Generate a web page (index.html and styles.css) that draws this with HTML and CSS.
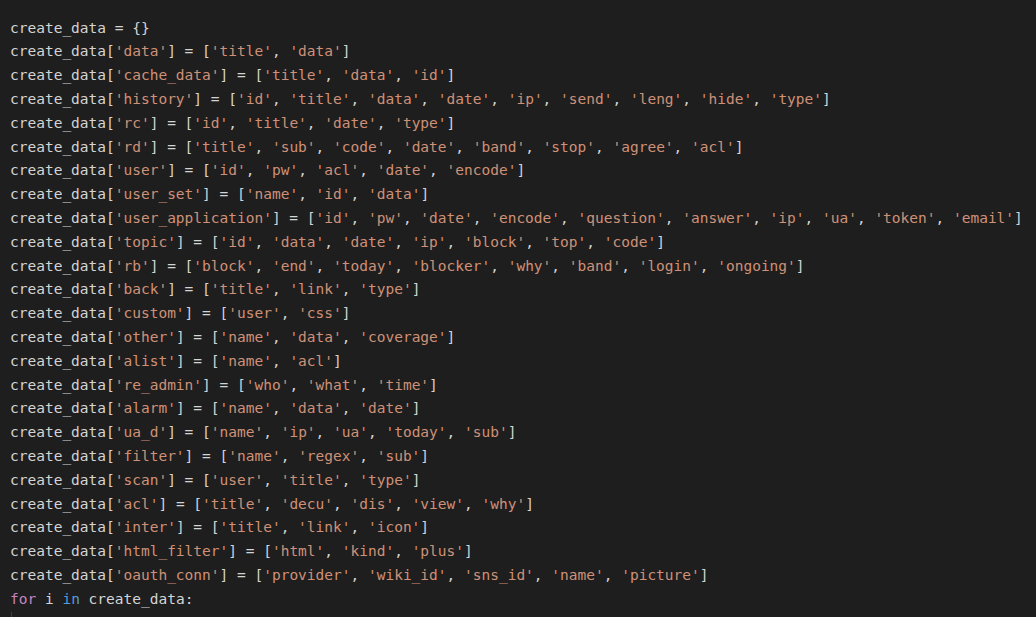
FILE: index.html
```html
<!DOCTYPE html>
<html>
<head>
<meta charset="utf-8">
<link rel="stylesheet" href="styles.css">
</head>
<body>
<div class="editor">
<div class="line">create_data = {}</div>
<div class="line">create_data[<span class="s">'data'</span>] = [<span class="s">'title'</span>, <span class="s">'data'</span>]</div>
<div class="line">create_data[<span class="s">'cache_data'</span>] = [<span class="s">'title'</span>, <span class="s">'data'</span>, <span class="s">'id'</span>]</div>
<div class="line">create_data[<span class="s">'history'</span>] = [<span class="s">'id'</span>, <span class="s">'title'</span>, <span class="s">'data'</span>, <span class="s">'date'</span>, <span class="s">'ip'</span>, <span class="s">'send'</span>, <span class="s">'leng'</span>, <span class="s">'hide'</span>, <span class="s">'type'</span>]</div>
<div class="line">create_data[<span class="s">'rc'</span>] = [<span class="s">'id'</span>, <span class="s">'title'</span>, <span class="s">'date'</span>, <span class="s">'type'</span>]</div>
<div class="line">create_data[<span class="s">'rd'</span>] = [<span class="s">'title'</span>, <span class="s">'sub'</span>, <span class="s">'code'</span>, <span class="s">'date'</span>, <span class="s">'band'</span>, <span class="s">'stop'</span>, <span class="s">'agree'</span>, <span class="s">'acl'</span>]</div>
<div class="line">create_data[<span class="s">'user'</span>] = [<span class="s">'id'</span>, <span class="s">'pw'</span>, <span class="s">'acl'</span>, <span class="s">'date'</span>, <span class="s">'encode'</span>]</div>
<div class="line">create_data[<span class="s">'user_set'</span>] = [<span class="s">'name'</span>, <span class="s">'id'</span>, <span class="s">'data'</span>]</div>
<div class="line">create_data[<span class="s">'user_application'</span>] = [<span class="s">'id'</span>, <span class="s">'pw'</span>, <span class="s">'date'</span>, <span class="s">'encode'</span>, <span class="s">'question'</span>, <span class="s">'answer'</span>, <span class="s">'ip'</span>, <span class="s">'ua'</span>, <span class="s">'token'</span>, <span class="s">'email'</span>]</div>
<div class="line">create_data[<span class="s">'topic'</span>] = [<span class="s">'id'</span>, <span class="s">'data'</span>, <span class="s">'date'</span>, <span class="s">'ip'</span>, <span class="s">'block'</span>, <span class="s">'top'</span>, <span class="s">'code'</span>]</div>
<div class="line">create_data[<span class="s">'rb'</span>] = [<span class="s">'block'</span>, <span class="s">'end'</span>, <span class="s">'today'</span>, <span class="s">'blocker'</span>, <span class="s">'why'</span>, <span class="s">'band'</span>, <span class="s">'login'</span>, <span class="s">'ongoing'</span>]</div>
<div class="line">create_data[<span class="s">'back'</span>] = [<span class="s">'title'</span>, <span class="s">'link'</span>, <span class="s">'type'</span>]</div>
<div class="line">create_data[<span class="s">'custom'</span>] = [<span class="s">'user'</span>, <span class="s">'css'</span>]</div>
<div class="line">create_data[<span class="s">'other'</span>] = [<span class="s">'name'</span>, <span class="s">'data'</span>, <span class="s">'coverage'</span>]</div>
<div class="line">create_data[<span class="s">'alist'</span>] = [<span class="s">'name'</span>, <span class="s">'acl'</span>]</div>
<div class="line">create_data[<span class="s">'re_admin'</span>] = [<span class="s">'who'</span>, <span class="s">'what'</span>, <span class="s">'time'</span>]</div>
<div class="line">create_data[<span class="s">'alarm'</span>] = [<span class="s">'name'</span>, <span class="s">'data'</span>, <span class="s">'date'</span>]</div>
<div class="line">create_data[<span class="s">'ua_d'</span>] = [<span class="s">'name'</span>, <span class="s">'ip'</span>, <span class="s">'ua'</span>, <span class="s">'today'</span>, <span class="s">'sub'</span>]</div>
<div class="line">create_data[<span class="s">'filter'</span>] = [<span class="s">'name'</span>, <span class="s">'regex'</span>, <span class="s">'sub'</span>]</div>
<div class="line">create_data[<span class="s">'scan'</span>] = [<span class="s">'user'</span>, <span class="s">'title'</span>, <span class="s">'type'</span>]</div>
<div class="line">create_data[<span class="s">'acl'</span>] = [<span class="s">'title'</span>, <span class="s">'decu'</span>, <span class="s">'dis'</span>, <span class="s">'view'</span>, <span class="s">'why'</span>]</div>
<div class="line">create_data[<span class="s">'inter'</span>] = [<span class="s">'title'</span>, <span class="s">'link'</span>, <span class="s">'icon'</span>]</div>
<div class="line">create_data[<span class="s">'html_filter'</span>] = [<span class="s">'html'</span>, <span class="s">'kind'</span>, <span class="s">'plus'</span>]</div>
<div class="line">create_data[<span class="s">'oauth_conn'</span>] = [<span class="s">'provider'</span>, <span class="s">'wiki_id'</span>, <span class="s">'sns_id'</span>, <span class="s">'name'</span>, <span class="s">'picture'</span>]</div>
<div class="line"><span class="ctl">for</span> i <span class="kw">in</span> create_data:</div>
<div class="line"><span class="guide"></span></div>
</div>
</body>
</html>
```
FILE: styles.css
```css
html, body {
  margin: 0;
  padding: 0;
  background: #1e1e1e;
  height: 617px;
  overflow: hidden;
}
.editor {
  padding: 16.7px 0 0 10px;
  font-family: "DejaVu Sans Mono", "Liberation Mono", monospace;
  font-size: 14.5px;
  line-height: 23.8px;
  color: #d4d4d4;
}
.line {
  height: 23.8px;
  white-space: pre;
}
.s { color: #ce9178; }
.ctl { color: #c586c0; }
.kw { color: #569cd6; }
.guide {
  display: inline-block;
  width: 1px;
  height: 23.8px;
  margin-left: 1px;
  background: #404040;
  vertical-align: top;
}
```
